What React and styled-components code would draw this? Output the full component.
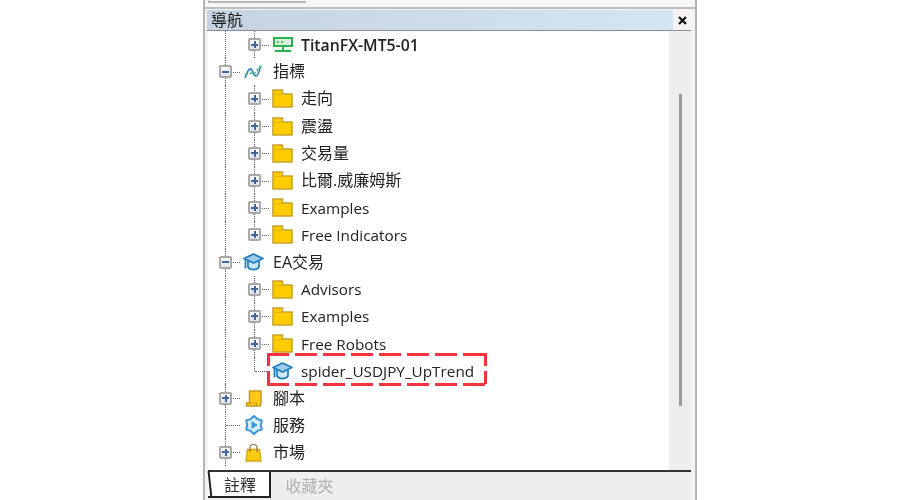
import React from 'react';
import styled, { createGlobalStyle } from 'styled-components';

const Global = createGlobalStyle`
  html, body {
    margin: 0;
    background: #fff;
  }
  body {
    font-family: "Open Sans", "Noto Sans CJK TC", sans-serif;
  }
`;

const Page = styled.div`
  width: 900px;
  height: 500px;
  overflow: hidden;
  padding-left: 203px;
  box-sizing: border-box;
`;

const Panel = styled.div`
  width: 494px;
  height: 500px;
  display: flex;
  flex-direction: column;
  box-sizing: border-box;
  background: #f4f4f4;
  border-left: 2px solid #b4b4b4;
  border-right: 2px solid #b4b4b4;
  filter: blur(0.35px);
`;

const TopStrip = styled.div`
  height: 7px;
  flex: none;
  background: #f7f7f7;
  border-bottom: 2px solid #bdbdbd;
`;

const TopField = styled.div`
  width: 97px;
  height: 1px;
  margin-left: 3px;
  background: #f7f7f7;
  border-bottom: 2px solid #b8b8b8;
  border-left: 1px solid #b8b8b8;
`;

const Header = styled.div`
  height: 20px;
  flex: none;
  display: flex;
  align-items: center;
  margin: 1px 4px 0 2px;
  border-bottom: 1px solid #8d8d8d;
`;

const HeaderTitle = styled.div`
  width: 466px;
  height: 100%;
  padding-left: 4px;
  box-sizing: border-box;
  font-size: 16px;
  line-height: 20px;
  color: #1b1b1b;
  background: linear-gradient(90deg, #c4d2e1, #d6e5f4);
`;

const CloseButton = styled.div`
  flex: 1;
  display: flex;
  justify-content: center;
  align-items: center;
`;

const Body = styled.div`
  height: 439px;
  flex: none;
  display: flex;
  margin: 0 4px 0 3px;
  background: #eee;
`;

const Tree = styled.div`
  width: 461px;
  flex: none;
  overflow: hidden;
  background: #fff;
  padding-left: 3px;
  box-sizing: border-box;
`;

const Row = styled.div`
  position: relative;
  height: 27.2px;
  display: flex;
  align-items: center;
`;

const Guide = styled.div`
  position: relative;
  width: 29px;
  height: 100%;
  flex: none;
  display: flex;
  align-items: center;
  justify-content: center;
  &::before {
    content: '';
    display: ${(p) => (p.$line ? 'block' : 'none')};
    position: absolute;
    left: 14px;
    top: 0;
    bottom: ${(p) => (p.$line === 'half' ? '50%' : '0')};
    border-left: 1px dotted #666;
  }
  &::after {
    content: '';
    display: ${(p) => (p.$branch ? 'block' : 'none')};
    position: absolute;
    left: 15px;
    right: 0;
    top: 50%;
    border-top: 1px dotted #666;
  }
`;

const Expander = styled.div`
  position: relative;
  z-index: 1;
  width: 13px;
  height: 13px;
  box-sizing: border-box;
  border: 2px solid #a8a8a8;
  border-radius: 2px;
  background: linear-gradient(#fff, #dfe3ea);
  &::before {
    content: '';
    position: absolute;
    left: 1px;
    right: 1px;
    top: 3.5px;
    height: 2px;
    background: #44659c;
  }
  &::after {
    content: '';
    display: ${(p) => (p.$open ? 'none' : 'block')};
    position: absolute;
    top: 1px;
    bottom: 1px;
    left: 3.5px;
    width: 2px;
    background: #44659c;
  }
`;

const IconSlot = styled.div`
  width: 21px;
  height: 100%;
  margin-left: 3px;
  flex: none;
  display: flex;
  align-items: center;
  justify-content: center;
`;

const Label = styled.div`
  margin-left: ${(p) => (p.$inner ? 8 : 9)}px;
  padding-bottom: ${(p) => (p.$cjk ? 3 : 0)}px;
  font-size: ${(p) => (p.$cjk ? 16 : p.$strong ? 15.8 : 15.3)}px;
  font-weight: ${(p) => (p.$strong ? 600 : 400)};
  color: #222;
  white-space: nowrap;
`;

// the red dashes are longer than a css dashed border draws them
const dashH = 'repeating-linear-gradient(90deg, #f5333f 0 22px, transparent 22px 28px)';
const dashV = 'repeating-linear-gradient(180deg, #f5333f 0 13px, transparent 13px 18px)';

const Highlight = styled.div`
  position: absolute;
  left: 56px;
  top: -4px;
  width: 220px;
  height: 33px;
  background-image: ${dashH}, ${dashH}, ${dashV}, ${dashV};
  background-size: 100% 3px, 100% 3px, 3px 100%, 3px 100%;
  background-position: 0 0, 0 100%, 0 0, 100% 0;
  background-repeat: no-repeat;
`;

const ScrollTrack = styled.div`
  flex: 1;
  display: flex;
  justify-content: center;
  padding-top: 63px;
  background: #eee;
`;

const ScrollThumb = styled.div`
  width: 3px;
  height: 312px;
  background: #999;
`;

const TabBar = styled.div`
  flex: 1;
  display: flex;
  margin: 0 4px 0 3px;
  background: #eee;
  border-top: 2px solid #333;
`;

const Tab = styled.div`
  position: relative;
  width: ${(p) => p.$width}px;
  height: 26px;
  display: flex;
  align-items: center;
  justify-content: center;
  font-size: 16px;
  color: ${(p) => (p.$active ? '#333' : '#b0b0b0')};
  background: ${(p) => (p.$active ? '#fff' : 'transparent')};
  box-sizing: border-box;
  ${(p) => p.$active && `
    padding-left: 3px;
    border-right: 2px solid #222;
    border-bottom: 2px solid #222;
    &::before {
      content: '';
      position: absolute;
      left: 1px;
      top: -1px;
      bottom: -2px;
      width: 2px;
      background: #222;
      transform: rotate(-6deg);
    }
  `}
`;

const ServerIcon = () => (
  <svg width="20" height="16" viewBox="0 0 20 16">
    <rect x="1" y="1" width="18" height="8" fill="#d8f2dd" stroke="#2bb24c" strokeWidth="2" />
    <path d="M4 5h2M8 5h2" stroke="#2bb24c" strokeWidth="1.5" />
    <path d="M10 9v4M2 14h16" stroke="#2bb24c" strokeWidth="2" />
  </svg>
);

const WaveIcon = () => (
  <svg width="19" height="16" viewBox="0 0 19 16" fill="none">
    <path d="M1 14C3 8 5 4 7 5s2 7 5 7 3-7 5-10" stroke="#2d7fc4" strokeWidth="1.6" />
    <path d="M1 10h4l2-1 3 1 3-3 1-3 3-2" stroke="#4dc06e" strokeWidth="1.5" strokeDasharray="3 1.5" />
  </svg>
);

const FolderIcon = () => (
  <svg width="21" height="19" viewBox="0 0 21 19">
    <path d="M1 18V1h9.5v4H20v13z" fill="#ffcc00" stroke="#c9a431" strokeWidth="1.6" />
    <path d="M1.5 5.5h9" stroke="#e3b400" strokeWidth="1" />
  </svg>
);

const CapIcon = () => (
  <svg width="21" height="18" viewBox="0 0 21 18" fill="none">
    <path d="M5 8v6c2 3.5 9 3.5 11 0V8" fill="#cfe6f7" stroke="#1f7dbd" strokeWidth="1.7" />
    <path d="M1 5.5 10.5 1 20 5.5 10.5 10z" fill="#9ccbed" stroke="#1f7dbd" strokeWidth="1.7" strokeLinejoin="round" />
    <path d="M2.5 6.5v9" stroke="#1f7dbd" strokeWidth="1.8" />
  </svg>
);

const ScrollIcon = () => (
  <svg width="17" height="17" viewBox="0 0 17 17">
    <path d="M4.500 1H16v12l-1 3H1.500v-3h3z" fill="#ffc918" stroke="#c79a1a" strokeWidth="1.5" strokeLinejoin="round" />
    <path d="M1.500 13h10v3" fill="none" stroke="#c79a1a" strokeWidth="1.2" />
  </svg>
);

const GearIcon = () => (
  <svg width="20" height="20" viewBox="0 0 20 20">
    <polygon
      points="10,1 13.4,4.1 17.8,5.5 16.8,10 17.8,14.5 13.4,15.9 10,19 6.6,15.9 2.2,14.5 3.2,10 2.2,5.5 6.6,4.1"
      fill="#d8ecfb"
      stroke="#3a97dc"
      strokeWidth="2"
      strokeLinejoin="round"
    />
    <path d="M8 6.8v6.400l5-3.200z" fill="#3a97dc" stroke="#3a97dc" strokeWidth="1" strokeLinejoin="round" />
  </svg>
);

const BagIcon = () => (
  <svg width="17" height="19" viewBox="0 0 17 19" fill="none">
    <path d="M2.500 6.500h12L16 18H1z" fill="#ffcb12" stroke="#d6a514" strokeWidth="1.4" />
    <path d="M5 9V4.500C5 0.500 12 0.500 12 4.500V9" stroke="#8a7430" strokeWidth="1.2" />
  </svg>
);

const icons = {
  server: ServerIcon,
  wave: WaveIcon,
  folder: FolderIcon,
  cap: CapIcon,
  scroll: ScrollIcon,
  gear: GearIcon,
  bag: BagIcon,
};

const rows = [
  { level: 1, icon: 'server', text: 'TitanFX-MT5-01', strong: true, box: true },
  { level: 0, icon: 'wave', text: '指標', cjk: true, box: true, open: true },
  { level: 1, icon: 'folder', text: '走向', cjk: true, box: true },
  { level: 1, icon: 'folder', text: '震盪', cjk: true, box: true },
  { level: 1, icon: 'folder', text: '交易量', cjk: true, box: true },
  { level: 1, icon: 'folder', text: '比爾.威廉姆斯', cjk: true, box: true },
  { level: 1, icon: 'folder', text: 'Examples', box: true },
  { level: 1, icon: 'folder', text: 'Free Indicators', box: true, last: true },
  { level: 0, icon: 'cap', text: 'EA交易', cjk: true, box: true, open: true },
  { level: 1, icon: 'folder', text: 'Advisors', box: true },
  { level: 1, icon: 'folder', text: 'Examples', box: true },
  { level: 1, icon: 'folder', text: 'Free Robots', box: true },
  { level: 1, icon: 'cap', text: 'spider_USDJPY_UpTrend', last: true, marked: true },
  { level: 0, icon: 'scroll', text: '腳本', cjk: true, box: true },
  { level: 0, icon: 'gear', text: '服務', cjk: true },
  { level: 0, icon: 'bag', text: '市場', cjk: true, box: true },
];

function TreeRow({ row }) {
  const Icon = icons[row.icon];
  const inner = row.level === 1;
  return (
    <Row>
      <Guide $line="full" $branch={!inner}>
        {!inner && row.box && <Expander $open={row.open} />}
      </Guide>
      {inner && (
        <Guide $line={row.last ? 'half' : 'full'} $branch>
          {row.box && <Expander />}
        </Guide>
      )}
      <IconSlot>
        <Icon />
      </IconSlot>
      <Label $inner={inner} $cjk={row.cjk} $strong={row.strong}>{row.text}</Label>
      {row.marked && <Highlight />}
    </Row>
  );
}

export default function App() {
  return (
    <Page>
      <Global />
      <Panel>
        <TopStrip>
          <TopField />
        </TopStrip>
        <Header>
          <HeaderTitle>導航</HeaderTitle>
          <CloseButton>
            <svg width="9" height="9" viewBox="0 0 9 9">
              <path d="M1 1l7 7M8 1L1 8" stroke="#111" strokeWidth="2.2" />
            </svg>
          </CloseButton>
        </Header>
        <Body>
          <Tree>
            {rows.map((row, i) => (
              <TreeRow key={i} row={row} />
            ))}
          </Tree>
          <ScrollTrack>
            <ScrollThumb />
          </ScrollTrack>
        </Body>
        <TabBar>
          <Tab $active $width={63}>註釋</Tab>
          <Tab $width={77}>收藏夾</Tab>
        </TabBar>
      </Panel>
    </Page>
  );
}
